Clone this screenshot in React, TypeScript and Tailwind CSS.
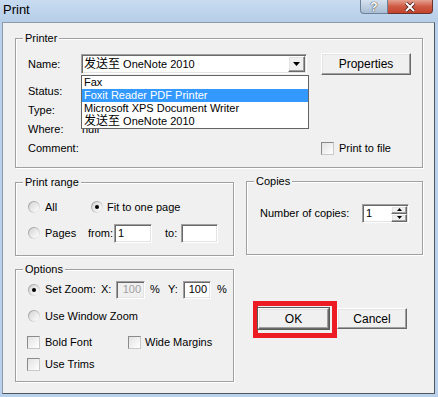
import type { ReactNode } from "react";

const sunken =
  "border border-t-[#a0a0a0] border-l-[#a0a0a0] border-b-white border-r-white shadow-[inset_1px_1px_0_#696969,inset_-1px_-1px_0_#e3e3e3]";
const raised =
  "border border-t-white border-l-white border-b-[#696969] border-r-[#696969] shadow-[inset_-1px_-1px_0_#a0a0a0,inset_1px_1px_0_#e3e3e3] bg-[#f0f0f0]";

function GroupBox({
  title,
  className,
  children,
}: {
  title: string;
  className: string;
  children: ReactNode;
}) {
  return (
    <div
      className={`relative flex flex-col border border-[#a0a0a0] shadow-[inset_1px_1px_0_#fff,1px_1px_0_#fff] ${className}`}
    >
      <span className="absolute -top-[7px] left-[7px] bg-[#f0f0f0] px-[2px] leading-[13px]">
        {title}
      </span>
      {children}
    </div>
  );
}

function Radio({ checked = false }: { checked?: boolean }) {
  return (
    <span className="flex h-[12px] w-[12px] shrink-0 items-center justify-center rounded-full bg-linear-to-br from-[#8c8c8c] to-white">
      <span className="flex h-[10px] w-[10px] items-center justify-center rounded-full bg-linear-to-br from-[#d4d4d4] to-white">
        {checked && <span className="h-[4px] w-[4px] rounded-full bg-black" />}
      </span>
    </span>
  );
}

function Checkbox({ className = "" }: { className?: string }) {
  return (
    <span
      className={`block h-[13px] w-[13px] shrink-0 border border-t-[#8a8a8a] border-l-[#8a8a8a] border-b-[#c8c8c8] border-r-[#c8c8c8] bg-linear-to-br from-[#e2e2e2] to-white ${className}`}
    />
  );
}

function PushButton({
  label,
  className,
}: {
  label: string;
  className: string;
}) {
  return (
    <div
      className={`flex items-center justify-center text-[12px] ${raised} ${className}`}
    >
      {label}
    </div>
  );
}

function Triangle({ up = false }: { up?: boolean }) {
  return (
    <svg width="7" height="4" viewBox="0 0 7 4">
      <path d={up ? "M3.5 0 L7 4 L0 4 Z" : "M0 0 L7 0 L3.5 4 Z"} fill="#000" />
    </svg>
  );
}

export default function App() {
  return (
    <div className="h-[397px] w-[438px] overflow-hidden bg-[#b9d1ea] font-['Liberation_Sans','Noto_Sans_CJK_SC',sans-serif] text-[11px] text-black">
      {/* title bar */}
      <div className="flex h-[22px] items-start justify-between bg-linear-to-b from-[#c8dbf0] to-[#b6cee8]">
        <span className="mt-[2px] ml-[3px] text-[13px] leading-[15px]">Print</span>
        <div className="mr-[5px] flex">
          <div className="flex h-[14px] w-[28px] items-center justify-center rounded-bl-[4px] border border-t-0 border-[#6e819a] bg-linear-to-b from-[#d6e2ef] to-[#a9bdd3]">
            <span className="text-[12px] leading-[12px] font-bold text-white [text-shadow:0_0_1px_#333,0_0_1px_#333]">
              ?
            </span>
          </div>
          <div className="flex h-[14px] w-[45px] items-center justify-center rounded-br-[4px] border border-t-0 border-l-0 border-[#6a3330] bg-linear-to-b from-[#e4a08f] via-[#cf5a44] to-[#c3432c]">
            <svg width="12" height="10" viewBox="0 0 12 10">
              <path d="M2 1 L10 9 M10 1 L2 9" stroke="#4a2020" strokeWidth="3.6" />
              <path d="M2 1 L10 9 M10 1 L2 9" stroke="#fff" strokeWidth="2" />
            </svg>
          </div>
        </div>
      </div>

      {/* dialog body */}
      <div className="ml-[2px] h-[372px] w-[433px] border border-t-[#8c9aab] border-l-[#8c9aab] border-b-[#4f5863] border-r-[#4f5863] bg-[#f0f0f0]">
        <GroupBox title="Printer" className="mt-[15px] ml-[12px] h-[130px] w-[408px] pl-[12px]">
          <div className="mt-[14px] flex h-[22px] items-center">
            <span className="w-[53px]">Name:</span>
            <div className={`relative flex h-[20px] w-[226px] items-center bg-white ${sunken}`}>
              <span className="flex-1 pl-[2px] leading-[14px]">
                <span className="text-[12px]">发送至</span> OneNote 2010
              </span>
              <div className={`mr-[1px] flex h-[16px] w-[17px] items-center justify-center ${raised}`}>
                <Triangle />
              </div>
              <div className="absolute top-[20px] -left-[1px] z-10 flex w-[228px] flex-col border border-[#646464] bg-white">
                <span className="h-[13px] pl-[2px] leading-[13px]">Fax</span>
                <span className="h-[13px] bg-[#3399ff] pl-[2px] leading-[13px] text-white">
                  Foxit Reader PDF Printer
                </span>
                <span className="h-[13px] pl-[2px] leading-[13px]">Microsoft XPS Document Writer</span>
                <span className="h-[13px] pl-[2px] leading-[13px]">
                  <span className="text-[12px]">发送至</span> OneNote 2010
                </span>
              </div>
            </div>
            <PushButton label="Properties" className="ml-[14px] h-[22px] w-[90px]" />
          </div>
          <div className="mt-[7px] flex h-[19px] items-center">
            <span className="w-[53px]">Status:</span>
          </div>
          <div className="flex h-[19px] items-center">
            <span className="w-[53px]">Type:</span>
          </div>
          <div className="flex h-[19px] items-center">
            <span className="w-[53px]">Where:</span>
            <span className="ml-[1px]">null</span>
          </div>
          <div className="flex h-[19px] items-center">
            <span className="w-[53px]">Comment:</span>
            <Checkbox className="ml-[240px]" />
            <span className="ml-[5px]">Print to file</span>
          </div>
        </GroupBox>

        <div className="mt-[14px] flex items-start">
          <div className="ml-[12px] flex w-[219px] flex-col">
            <GroupBox title="Print range" className="h-[74px] pl-[12px]">
              <div className="mt-[16px] flex h-[16px] items-center">
                <Radio />
                <span className="ml-[5px] w-[46px]">All</span>
                <Radio checked />
                <span className="ml-[4px]">Fit to one page</span>
              </div>
              <div className="mt-[8px] flex h-[20px] items-center">
                <Radio />
                <span className="ml-[5px] w-[43px]">Pages</span>
                <span className="w-[26px]">from:</span>
                <div className={`flex h-[19px] w-[38px] items-center bg-white pl-[3px] ${sunken}`}>1</div>
                <span className="ml-[13px] w-[16px]">to:</span>
                <div className={`h-[19px] w-[37px] bg-white ${sunken}`} />
              </div>
            </GroupBox>

            <GroupBox title="Options" className="mt-[13px] h-[113px]">
              <div className="mt-[10px] flex h-[19px] items-center pl-[12px]">
                <Radio checked />
                <span className="ml-[5px] w-[56px]">Set Zoom:</span>
                <span className="w-[15px]">X:</span>
                <div className={`flex h-[18px] w-[29px] items-center justify-end bg-[#f0f0f0] pr-[3px] text-[#a0a0a0] ${sunken}`}>
                  100
                </div>
                <span className="ml-[5px] w-[18px]">%</span>
                <span className="w-[15px]">Y:</span>
                <div className={`flex h-[18px] w-[28px] items-center justify-end bg-white pr-[3px] ${sunken}`}>
                  100
                </div>
                <span className="ml-[6px]">%</span>
              </div>
              <div className="mt-[9px] flex h-[16px] items-center pl-[12px]">
                <Radio />
                <span className="ml-[5px]">Use Window Zoom</span>
              </div>
              <div className="mt-[10px] flex h-[16px] items-center pl-[11px]">
                <Checkbox />
                <span className="ml-[5px] w-[83px]">Bold Font</span>
                <Checkbox />
                <span className="ml-[4px]">Wide Margins</span>
              </div>
              <div className="mt-[6px] flex h-[16px] items-center pl-[11px]">
                <Checkbox />
                <span className="ml-[5px]">Use Trims</span>
              </div>
            </GroupBox>
          </div>

          <div className="ml-[12px] flex w-[177px] flex-col">
            <GroupBox title="Copies" className="-mt-[1px] h-[74px] pl-[13px]">
              <div className="mt-[22px] flex h-[19px] items-center">
                <span className="w-[102px]">Number of copies:</span>
                <div className={`flex h-[19px] w-[47px] items-center bg-white ${sunken}`}>
                  <span className="flex-1 pl-[3px]">1</span>
                  <div className="mr-[1px] flex flex-col">
                    <div className={`flex h-[8px] w-[16px] items-center justify-center ${raised}`}>
                      <svg width="5" height="3" viewBox="0 0 5 3">
                        <path d="M2.5 0 L5 3 L0 3 Z" fill="#000" />
                      </svg>
                    </div>
                    <div className={`flex h-[8px] w-[16px] items-center justify-center ${raised}`}>
                      <svg width="5" height="3" viewBox="0 0 5 3">
                        <path d="M0 0 L5 0 L2.5 3 Z" fill="#000" />
                      </svg>
                    </div>
                  </div>
                </div>
              </div>
            </GroupBox>

            <div className="mt-[46px] flex items-start">
              <div className="ml-[7px] border-[5px] border-[#ed1c24] pt-[2px] pr-[3px] pb-[4px]">
                <PushButton label="OK" className="h-[21px] w-[71px] outline outline-1 outline-[#5a5a5a]" />
              </div>
              <PushButton label="Cancel" className="mt-[7px] h-[21px] w-[70px]" />
            </div>
          </div>
        </div>
      </div>
    </div>
  );
}
